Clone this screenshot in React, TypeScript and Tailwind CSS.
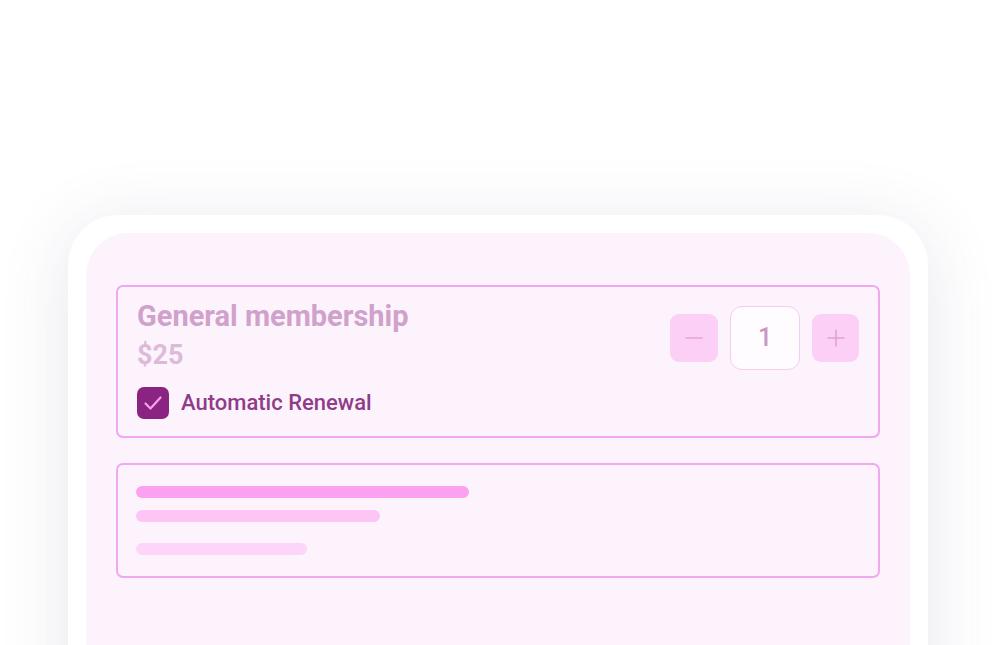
import React, { useState } from 'react';

export default function App() {
    const [qty, setQty] = useState(1);
    const [autoRenew, setAutoRenew] = useState(true);

    return (
        <div className="h-[645px] w-full overflow-hidden bg-white font-['Roboto',sans-serif]">
            <div className="ml-[68px] mt-[215px] h-[520px] w-[860px] rounded-[50px] bg-white px-[18px] pt-[18px] shadow-[0_10px_70px_rgba(70,70,120,0.13)]">
                <div className="h-full rounded-[42px] bg-[#fdf3fd] px-[30px] pt-[52px]">
                    {/* membership card */}
                    <div className="flex items-start justify-between rounded-[7px] border-2 border-[#f0a8ee] px-[19px] pb-[17px] pt-[12px]">
                        <div>
                            <div className="text-[29px] font-bold leading-[34px] text-[#d0a1ca]">General membership</div>
                            <div className="mt-[5px] text-[27px] font-bold leading-[34px] text-[#dcbad8]">$25</div>
                            <label className="mt-[15px] flex cursor-pointer items-center gap-[12px]">
                                <button
                                    type="button"
                                    onClick={() => setAutoRenew(!autoRenew)}
                                    className="flex h-[32px] w-[32px] items-center justify-center rounded-[7px] bg-[#8a2381]"
                                >
                                    {autoRenew && (
                                        <svg width="22" height="22" viewBox="0 0 22 22" fill="none">
                                            <path d="M3.5 11.5L8.5 16.5L18.5 5.5" stroke="#f7a2ea" strokeWidth="2.2" strokeLinecap="round" strokeLinejoin="round" />
                                        </svg>
                                    )}
                                </button>
                                <span className="text-[22px] font-medium leading-[32px] text-[#8f3d89]">Automatic Renewal</span>
                            </label>
                        </div>

                        <div className="mt-[7px] flex items-center gap-[12px]">
                            <button
                                type="button"
                                onClick={() => setQty(Math.max(1, qty - 1))}
                                className="flex h-[48px] w-[48px] items-center justify-center rounded-[9px] bg-[#fccff7]"
                            >
                                <svg width="20" height="20" viewBox="0 0 20 20" fill="none">
                                    <path d="M2 10H18" stroke="#e3a4da" strokeWidth="1.6" strokeLinecap="round" />
                                </svg>
                            </button>
                            <div className="flex h-[64px] w-[70px] items-center justify-center rounded-[12px] border border-[#f4cdef] bg-[#fffcff] text-[25px] font-medium text-[#c898c1]">
                                {qty}
                            </div>
                            <button
                                type="button"
                                onClick={() => setQty(qty + 1)}
                                className="flex h-[48px] w-[47px] items-center justify-center rounded-[9px] bg-[#fccff7]"
                            >
                                <svg width="20" height="20" viewBox="0 0 20 20" fill="none">
                                    <path d="M2 10H18M10 2V18" stroke="#e0a2d8" strokeWidth="1.6" strokeLinecap="round" />
                                </svg>
                            </button>
                        </div>
                    </div>

                    {/* placeholder card */}
                    <div className="mt-[25px] flex flex-col rounded-[7px] border-2 border-[#f0a8ee] px-[18px] pb-[21px] pt-[21px]">
                        <div className="h-[12px] w-[333px] rounded-full bg-[#fca1f1]" />
                        <div className="mt-[12px] h-[12px] w-[244px] rounded-full bg-[#fdc5f6]" />
                        <div className="mt-[21px] h-[12px] w-[171px] rounded-full bg-[#fdd5f8]" />
                    </div>
                </div>
            </div>
        </div>
    );
}
